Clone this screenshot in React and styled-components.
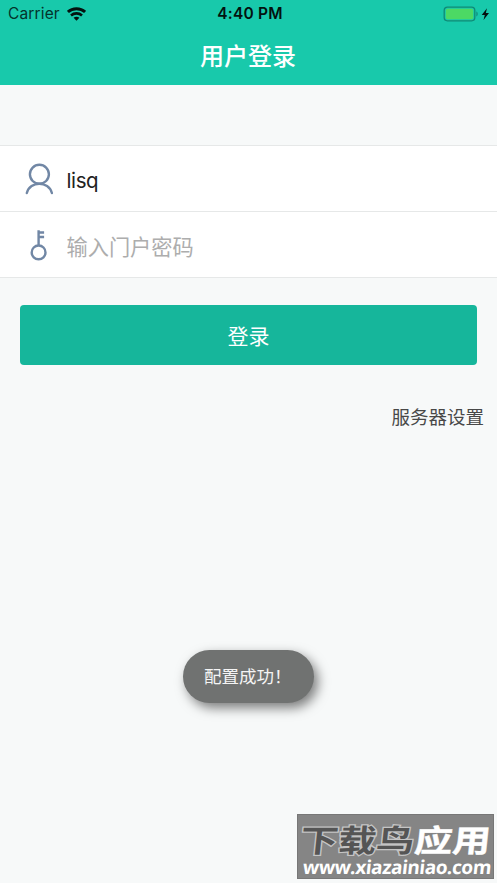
import React, { useState } from 'react';
import styled, { createGlobalStyle } from 'styled-components';

const GlobalStyle = createGlobalStyle`
  * {
    box-sizing: border-box;
  }

  body {
    margin: 0;
    background-color: #f7f9f9;
    font-family: 'Inter', 'Noto Sans CJK SC', sans-serif;
  }
`;

const Page = styled.div`
  position: relative;
  display: flex;
  flex-direction: column;
  min-height: 100vh;
  overflow: hidden;
  background-color: #f7f9f9;
`;

const Header = styled.header`
  height: 84.5px;
  background-color: #18c9ab;
`;

const StatusBar = styled.div`
  display: grid;
  grid-template-columns: 1fr auto 1fr;
  align-items: center;
  height: 28px;
  padding: 0 5px 0 8px;
  font-size: 15.5px;
  line-height: 28px;
  color: #04332b;
`;

const Carrier = styled.div`
  display: flex;
  align-items: center;
  gap: 7px;
  letter-spacing: 0.15px;
`;

const Clock = styled.div`
  font-weight: 600;
  letter-spacing: 0.2px;
  color: #03120f;
`;

const Battery = styled.div`
  display: flex;
  justify-content: flex-end;
  padding-right: 1px;
`;

const Title = styled.h1`
  margin: 0;
  height: 56px;
  font-size: 24px;
  font-weight: 500;
  line-height: 58px;
  text-align: center;
  text-indent: -1px;
  color: #fff;
`;

const Form = styled.form`
  display: flex;
  flex-direction: column;
  margin-top: 60.5px;
`;

const Fields = styled.div`
  border-top: 1px solid #e6e8e8;
  background-color: #fff;
`;

const Field = styled.label`
  display: flex;
  align-items: center;
  height: 66px;
  padding: 0 20px 0 23px;
  border-bottom: 1px solid #e6e8e8;
`;

const FieldIcon = styled.span`
  display: flex;
  flex: none;
  width: 43.5px;
`;

const Input = styled.input`
  flex: 1;
  min-width: 0;
  height: 40px;
  margin-top: 4px;
  padding: 0;
  border: 0;
  outline: none;
  background: none;
  font-family: 'Inter', 'Noto Sans CJK SC', sans-serif;
  font-size: ${({ $size }) => $size}px;
  letter-spacing: ${({ $spacing }) => $spacing || 0}px;
  color: #222;

  &::placeholder {
    color: #adadad;
    opacity: 1;
  }
`;

const LoginButton = styled.button`
  height: 60.5px;
  margin: 26.5px 20px 0;
  padding: 0;
  border: 0;
  border-radius: 4px;
  background-color: #16b69b;
  font-family: 'Noto Sans CJK SC', sans-serif;
  font-size: 21px;
  line-height: 60px;
  color: #fff;
`;

const ServerLink = styled.a`
  align-self: flex-end;
  margin: 36px 13px 0 0;
  font-family: 'Noto Sans CJK SC', sans-serif;
  font-size: 18.5px;
  line-height: 30px;
  color: #484848;
`;

const Toast = styled.div`
  position: absolute;
  top: 650px;
  left: 183px;
  width: 131px;
  height: 53px;
  padding-left: 21px;
  border-radius: 27px;
  background-color: #707271;
  box-shadow: 4px 5px 12px rgba(0, 0, 0, 0.5);
  font-family: 'Noto Sans CJK SC', sans-serif;
  font-size: 17.5px;
  line-height: 52px;
  white-space: nowrap;
  color: #f4f4f4;
`;

const Watermark = styled.div`
  position: absolute;
  top: 814px;
  left: 297px;
  display: flex;
  flex-direction: column;
  width: 197px;
  height: 65px;
  border: 1px solid #777;
  background-color: #858585;
`;

const Brand = styled.div`
  display: flex;
  height: 42px;
  padding-left: 3px;
  font-family: 'Noto Sans CJK SC', sans-serif;
  font-size: 38px;
  font-weight: 700;
  line-height: 48px;
  white-space: nowrap;
  transform: skewX(-6deg) scaleY(0.82);
`;

const BrandPart = styled.span`
  color: ${({ $color }) => $color};
  -webkit-text-stroke: ${({ $stroke }) => $stroke};
  paint-order: stroke fill;
`;

const SiteAddress = styled.div`
  padding-left: 5px;
  font-family: 'Open Sans', sans-serif;
  font-size: 19px;
  font-weight: 700;
  line-height: 21px;
  letter-spacing: -0.45px;
  white-space: nowrap;
  color: #fff;
  transform: skewX(-6deg);
`;

const WifiIcon = () => (
  <svg width="19" height="14" viewBox="0 0 19 14" fill="none" stroke="#04120f">
    <path d="M.9 4.9C5.5.6 13.5.6 18.1 4.9" strokeWidth="3" />
    <path d="M4 8.4c3.1-2.7 7.9-2.7 11 0" strokeWidth="2.6" />
    <path d="M6.6 10.7c1.6-1.4 4.2-1.4 5.8 0L9.5 13.8z" fill="#04120f" stroke="none" />
  </svg>
);

const BatteryIcon = () => (
  <svg width="48" height="16" viewBox="0 0 48 16">
    <rect x="1.2" y="1.2" width="30.6" height="13.6" rx="3.2" fill="none" stroke="#108a76" strokeWidth="1.3" />
    <rect x="2.8" y="2.8" width="27.4" height="10.4" rx="1.8" fill="#4cd964" />
    <path d="M33.4 5.6c1.7.6 1.7 4.2 0 4.8z" fill="#108a76" />
    <path d="M44 2.2l-5.3 6.7h3.1L40.5 14l5.5-7h-3.2z" fill="#04120f" />
  </svg>
);

const UserIcon = () => (
  <svg width="32" height="34" viewBox="0 0 32 34" fill="none" stroke="#7187a5" strokeWidth="2.4">
    <circle cx="16.4" cy="12.3" r="9.5" />
    <path d="M3.8 31C7 18.6 25.6 18.6 28.9 31" strokeLinecap="round" />
  </svg>
);

const KeyIcon = () => (
  <svg width="32" height="34" viewBox="0 0 32 34" fill="none" stroke="#7187a5" strokeWidth="2.4">
    <circle cx="15.6" cy="24.4" r="6.9" />
    <path d="M15.6 18V2.2M15.6 4.5h5.5M15.6 9h5.5" />
  </svg>
);

const App = () => {
  const [username, setUsername] = useState('lisq');
  const [password, setPassword] = useState('');

  return (
    <Page>
      <GlobalStyle />
      <Header>
        <StatusBar>
          <Carrier>Carrier <WifiIcon /></Carrier>
          <Clock>4:40 PM</Clock>
          <Battery><BatteryIcon /></Battery>
        </StatusBar>
        <Title>用户登录</Title>
      </Header>
      <Form onSubmit={(e) => e.preventDefault()}>
        <Fields>
          <Field>
            <FieldIcon><UserIcon /></FieldIcon>
            <Input
              $size={20.5}
              $spacing={-0.4}
              value={username}
              onChange={(e) => setUsername(e.target.value)}
            />
          </Field>
          <Field>
            <FieldIcon><KeyIcon /></FieldIcon>
            <Input
              $size={21.2}
              type="password"
              placeholder="输入门户密码"
              value={password}
              onChange={(e) => setPassword(e.target.value)}
            />
          </Field>
        </Fields>
        <LoginButton type="submit">登录</LoginButton>
        <ServerLink>服务器设置</ServerLink>
      </Form>
      <Toast>配置成功！</Toast>
      <Watermark>
        <Brand>
          <BrandPart $color="#555" $stroke="3px #c4c4c4">下载鸟</BrandPart>
          <BrandPart $color="#fff" $stroke="0.5px #fff">应用</BrandPart>
        </Brand>
        <SiteAddress>www.xiazainiao.com</SiteAddress>
      </Watermark>
    </Page>
  );
};

export default App;
